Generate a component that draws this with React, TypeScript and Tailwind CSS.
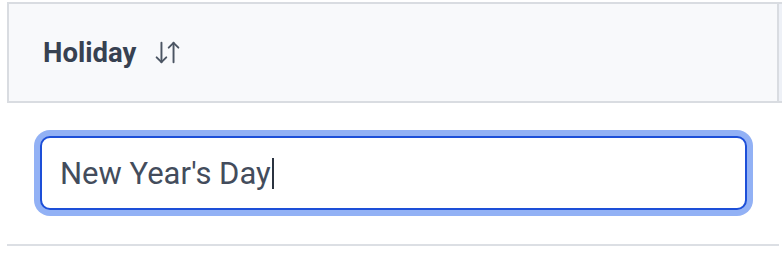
import React from "react";
import { ArrowDownUp } from "lucide-react";

export default function App() {
  return (
    <div className="w-[782px] h-[272px] bg-white overflow-hidden" style={{ fontFamily: "Roboto, 'Liberation Sans', sans-serif" }}>
      <div className="pt-[2px] pl-[7px] w-[900px]">
        <div className="flex">
          <div className="w-[772px] h-[101px] shrink-0 bg-[#f8f9fb] border-2 border-[#d9dce1] flex items-center pl-[34px]">
            <span className="text-[27.5px] font-bold text-[#374151] leading-none">Holiday</span>
            <ArrowDownUp size={29} strokeWidth={1.6} className="ml-[17px] text-[#4b5563]" />
          </div>
          <div className="w-[100px] h-[101px] shrink-0 bg-[#eef1f7] border-t-2 border-b-2 border-[#d9dce1]" />
        </div>
        <div className="w-[772px] pl-[1px] border-b-2 border-[#dcdfe4]">
          <div className="pl-[32px] pt-[33px] pb-[34px] pr-[31px]">
            <div className="h-[74px] w-[707px] rounded-[10px] border-2 border-[#1d4fd8] ring-[6px] ring-[#2563eb]/50 bg-white flex items-center pl-[18px]">
              <span className="text-[31px] text-[#434c5c] leading-none">New Year's Day</span>
              <span className="inline-block w-[2px] h-[31px] bg-[#2b3340] ml-[1px]" />
            </div>
          </div>
        </div>
      </div>
    </div>
  );
}
